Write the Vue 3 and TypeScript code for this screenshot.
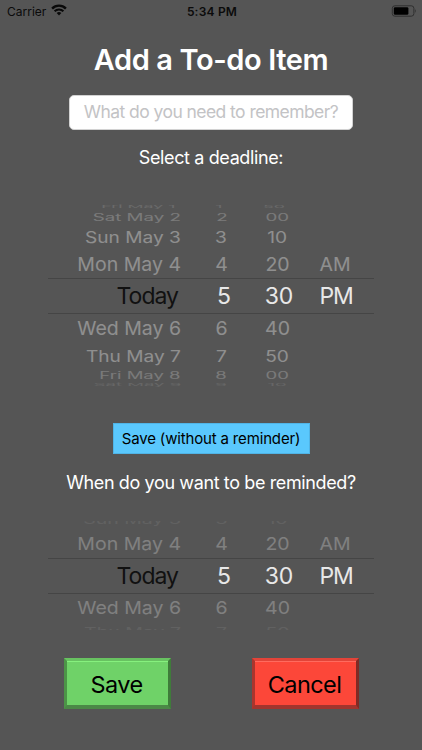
<script setup lang="ts">
interface WheelRow {
  cells: string[]
  height: number
  sx: number
  sy: number
  alpha: number
  shift?: number
  selected?: boolean
}

const row = (cells: string[], height: number, sx: number, sy: number, alpha: number, shift = 0): WheelRow => ({
  cells, height, sx, sy, alpha, shift,
})
const today: WheelRow = { cells: ['Today', '5', '30', 'PM'], height: 36, sx: 1, sy: 1, alpha: 1, selected: true }

const deadlineRows: WheelRow[] = [
  row(['Fri May 1', '1', '50', ''], 8, 0.91, 0.2, 0.12),
  row(['Sat May 2', '2', '00', ''], 12, 0.96, 0.5, 0.22),
  row(['Sun May 3', '3', '10', ''], 27, 0.98, 0.8, 0.34, 0.5),
  row(['Mon May 4', '4', '20', 'AM'], 28, 1, 0.98, 0.34, 0.5),
  today,
  row(['Wed May 6', '6', '40', ''], 29, 1, 0.98, 0.34, -0.5),
  row(['Thu May 7', '7', '50', ''], 26, 0.98, 0.8, 0.34),
  row(['Fri May 8', '8', '00', ''], 12, 0.95, 0.5, 0.22),
  row(['Sat May 9', '9', '10', ''], 8, 0.95, 0.2, 0.1),
]

const reminderRows: WheelRow[] = [
  row(['Sun May 3', '3', '10', ''], 8, 1, 0.6, 0.07, -5.5),
  row(['Mon May 4', '4', '20', 'AM'], 29, 1, 0.92, 0.25),
  today,
  row(['Wed May 6', '6', '40', ''], 28, 1, 0.92, 0.25, -0.5),
  row(['Thu May 7', '7', '50', ''], 8, 1, 0.6, 0.07, 6),
]

const wheels = { deadline: deadlineRows, reminder: reminderRows }
const faceStyle = (r: WheelRow) => ({
  transform: `translateY(${r.shift ?? 0}px) scale(${r.sx}, ${r.sy})`,
  opacity: r.alpha,
})
</script>

<template>
  <main class="screen">
    <header class="status">
      <div class="carrier">
        <span>Carrier</span>
        <svg width="16" height="12" viewBox="0 0 16 12">
          <path d="M1.1 4.6 A9.6 9.6 0 0 1 14.9 4.6" fill="none" stroke="#090909" stroke-width="2.4" />
          <path d="M3.6 7.3 A6 6 0 0 1 12.4 7.3" fill="none" stroke="#090909" stroke-width="2" />
          <path d="M5.7 9.1 A3.3 3.3 0 0 1 10.3 9.1 L8 11.6 Z" fill="#090909" />
        </svg>
      </div>
      <span class="time">5:34 PM</span>
      <svg class="battery" width="26" height="13" viewBox="0 0 26 13">
        <rect x="1.3" y="0.8" width="21.6" height="10.4" rx="2.6" fill="none" stroke="#2f2f2f" />
        <rect x="2.8" y="2.3" width="14.6" height="7.4" rx="1.3" fill="#000" />
        <path d="M24.2 4 Q25.8 6 24.2 8 Z" fill="#2f2f2f" />
      </svg>
    </header>

    <h1 class="title">Add a To-do Item</h1>
    <input class="field" type="text" placeholder="What do you need to remember?" />
    <p class="label deadline-label">Select a deadline:</p>

    <section v-for="(rows, name) in wheels" :key="name" class="block">
      <div class="wheel" :class="name">
        <div
          v-for="(r, i) in rows"
          :key="i"
          class="row"
          :class="{ selected: r.selected }"
          :style="{ height: r.height + 'px' }"
        >
          <div v-for="(c, j) in r.cells" :key="j" class="cell" :class="'col' + j">
            <span :style="faceStyle(r)">{{ c }}</span>
          </div>
        </div>
      </div>
      <template v-if="name === 'deadline'">
        <button class="quick">Save (without a reminder)</button>
        <p class="label remind-label">When do you want to be reminded?</p>
      </template>
    </section>

    <footer class="actions">
      <button class="action save">Save</button>
      <button class="action cancel">Cancel</button>
    </footer>
  </main>
</template>

<style>
body {
  margin: 0;
  background: #555;
}
</style>

<style scoped>
.screen {
  box-sizing: border-box;
  width: 422px;
  height: 750px;
  overflow: hidden;
  display: flex;
  flex-direction: column;
  align-items: center;
  background: #555;
  color: #fff;
  font-family: Inter, "Liberation Sans", sans-serif;
}
button {
  font-family: inherit;
  padding: 0;
  color: #000;
  white-space: nowrap;
}
.status {
  box-sizing: border-box;
  width: 100%;
  height: 22px;
  padding: 0 5px 0 7px;
  display: grid;
  grid-template-columns: 1fr auto 1fr;
  align-items: center;
  font-size: 12px;
  color: #0b0b0b;
}
.carrier {
  display: flex;
  align-items: center;
  gap: 5px;
}
.carrier svg {
  margin-top: -2px;
}
.time {
  font-weight: 600;
  letter-spacing: 0.2px;
}
.battery {
  justify-self: end;
}
.title {
  margin: 20px 0 0;
  height: 36px;
  line-height: 36px;
  font-size: 29px;
  font-weight: 600;
  letter-spacing: -0.4px;
  white-space: nowrap;
}
.field {
  box-sizing: border-box;
  width: 284px;
  height: 35px;
  margin-top: 17px;
  padding: 0 0 2px;
  border: 1px solid #d2d2d2;
  border-radius: 5px;
  background: #fff;
  text-align: center;
  font-family: inherit;
  font-size: 17.5px;
  letter-spacing: -0.56px;
}
.field::placeholder {
  color: #c3c3c5;
  opacity: 1;
}
.label {
  margin: 0;
  height: 24px;
  line-height: 24px;
  font-size: 18px;
  letter-spacing: -0.38px;
  white-space: nowrap;
}
.deadline-label {
  margin-top: 16px;
}
.block {
  width: 100%;
  display: flex;
  flex-direction: column;
  align-items: center;
}
.wheel {
  width: 326px;
}
.deadline {
  margin-top: 33px;
}
.reminder {
  margin-top: 26px;
}
.reminder .row:first-child,
.reminder .row:last-child {
  overflow: hidden;
}
.row {
  box-sizing: border-box;
  display: grid;
  grid-template-columns: 133px 81px 31px 84px;
  grid-template-rows: 100%;
  font-size: 19.5px;
}
.deadline .row:first-child .col0 {
  padding-right: 3px;
}
.deadline .row:first-child {
  grid-template-columns: 130px 81px 31px 84px;
}
.row.selected {
  border: solid #454545;
  border-width: 1px 0;
  font-size: 23px;
}
.cell {
  min-height: 0;
  display: flex;
  align-items: center;
  justify-content: center;
  line-height: 24px;
  white-space: nowrap;
}
.cell span {
  flex: none;
}
.col0 {
  justify-content: flex-end;
}
.col0 span {
  transform-origin: right center;
}
.selected .col0 {
  padding-right: 3px;
  margin-left: -1px;
  color: #111;
  letter-spacing: -1px;
}
.selected .col1 {
  padding-left: 5px;
}
.selected .col2 {
  padding-left: 3px;
}
.selected .col3 {
  padding-left: 2px;
  letter-spacing: -1.2px;
}
.selected .cell:not(.col0) {
  color: #e8e8e8;
}
.quick {
  margin-top: 34px;
  width: 197px;
  height: 31px;
  border: 1px solid #50b4e6;
  background: #5ac8fd;
  font-size: 15px;
  letter-spacing: -0.16px;
}
.remind-label {
  margin-top: 17px;
}
.actions {
  width: 100%;
  display: flex;
  justify-content: center;
  gap: 81px;
  margin-top: 28px;
}
.action {
  box-sizing: border-box;
  width: 107px;
  height: 51px;
  padding: 2px 1px 0 0;
  border-style: solid;
  border-width: 3px 3px 4px;
  font-size: 23.5px;
  letter-spacing: -0.6px;
}
.save {
  background: #6fd268;
  border-color: #68c261 #3f7c3a #4b8847 #4c9447;
  box-shadow: inset 0 1px #86f07e;
}
.cancel {
  background: #fc4739;
  border-color: #e24439 #7f2b25 #a1352e #ab352d;
  box-shadow: inset 0 1px #ff6b5f;
}
</style>
